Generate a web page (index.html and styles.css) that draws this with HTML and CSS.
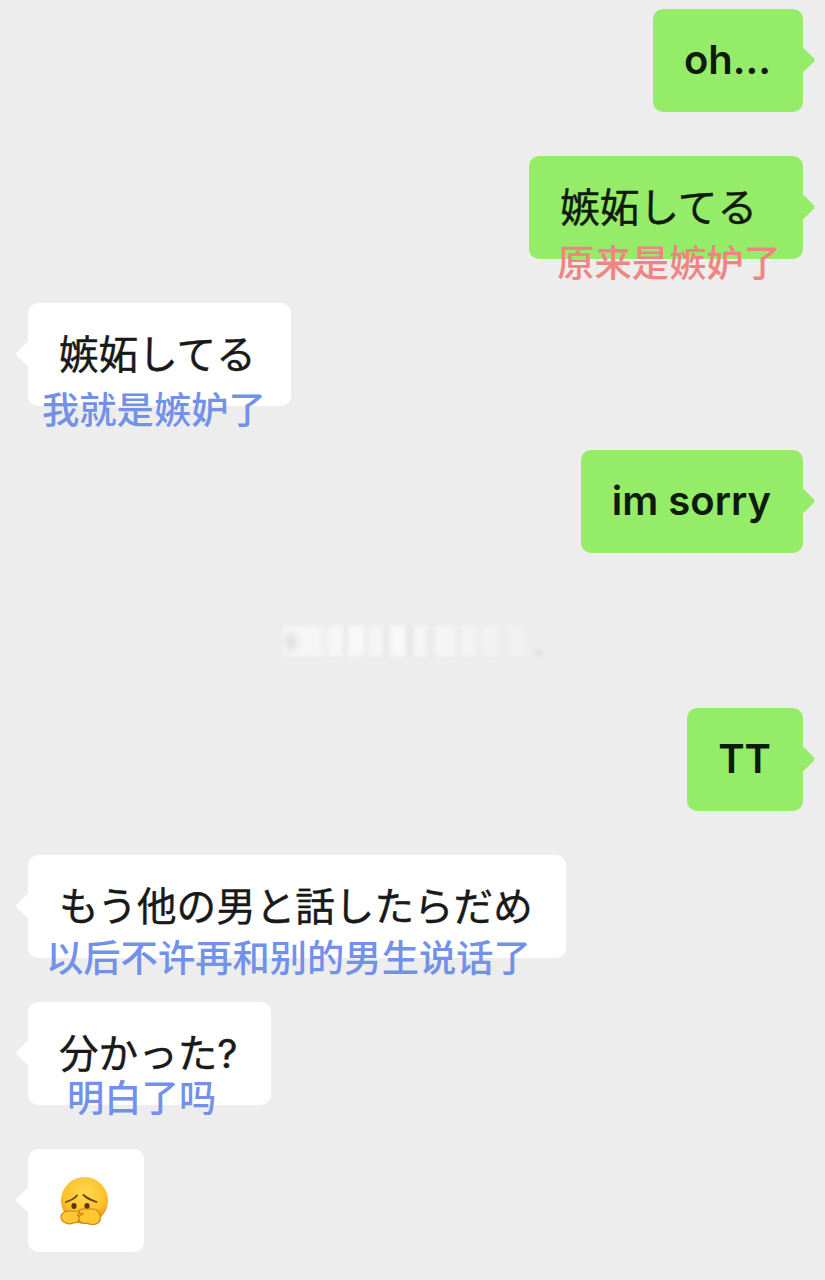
FILE: index.html
```html
<!DOCTYPE html>
<html lang="ja">
<head>
    <meta charset="UTF-8">
    <title>Chat</title>
    <link rel="stylesheet" href="styles.css">
</head>
<body>
    <div class="chat">
        <div class="row me">
            <div class="bubble latin">oh...</div>
        </div>
        <div class="row me">
            <div class="bubble wide">嫉妬してる
                <span class="sub red sub-a" lang="zh">原来是嫉妒了</span>
            </div>
        </div>
        <div class="row">
            <div class="bubble roomy">嫉妬してる
                <span class="sub blue sub-b" lang="zh">我就是嫉妒了</span>
            </div>
        </div>
        <div class="row me">
            <div class="bubble latin">im sorry</div>
        </div>

        <div class="notice"><div class="smear"></div></div>

        <div class="row me">
            <div class="bubble latin">TT</div>
        </div>
        <div class="row">
            <div class="bubble">もう他の男と話したらだめ
                <span class="sub blue sub-c" lang="zh">以后不许再和别的男生说话了</span>
            </div>
        </div>
        <div class="row">
            <div class="bubble">分かった?
                <span class="sub blue sub-d" lang="zh">明白了吗</span>
            </div>
        </div>
        <div class="row">
            <div class="bubble emoji-bubble">
                <svg class="emoji" viewBox="0 0 50 50" width="50" height="50" aria-hidden="true">
                    <defs>
                        <radialGradient id="face" cx="50%" cy="35%" r="68%">
                            <stop offset="0" stop-color="#ffd94c"/>
                            <stop offset="0.65" stop-color="#fcc22c"/>
                            <stop offset="1" stop-color="#e48a1a"/>
                        </radialGradient>
                    </defs>
                    <circle cx="24.5" cy="24.500" r="23.500" fill="url(#face)"/>
                    <path d="M6 26c3-1 8-3 11-6.500M36.500 26c-3-1-9-3-13-7" fill="none" stroke="#6b3f12" stroke-width="1.800" stroke-linecap="round"/>
                    <ellipse cx="14" cy="30" rx="2.600" ry="3" fill="#5a3410"/>
                    <ellipse cx="27" cy="30" rx="2.600" ry="3" fill="#5a3410"/>
                    <path d="M1 41c0-3 3-6 7-6h8c3 0 4 3 2 4h-1c2 1 3 3 2 5-1 3-4 3-6 3-2 1-5 1-7 0-3-1-5-3-5-6z" fill="#fdc832" stroke="#d0800f" stroke-width="1.200"/>
                    <path d="M38 47c2-1 3-5 2-8-1-4-4-6-7-6h-11c-3 0-4 3-2 4l3 1c-3 1-5 3-4 6 1 3 5 4 8 3 3 2 8 2 11 0z" fill="#fdc832" stroke="#d0800f" stroke-width="1.200"/>
                </svg>
            </div>
        </div>
    </div>
</body>
</html>
```

FILE: styles.css
```css
body{
    margin:0;
    background:#ededed;
    font-family:Inter,"Noto Sans CJK JP",sans-serif;
    overflow:hidden;
}
.chat{
    height:1280px;
    box-sizing:border-box;
    padding:9px 22px 0 28px;
    display:flex;
    flex-direction:column;
    gap:44px;
}
.row{
    display:flex;
}
.row.me{
    justify-content:flex-end;
}
.bubble{
    position:relative;
    height:103px;
    box-sizing:border-box;
    padding:0 33px 7px 31px;
    display:flex;
    align-items:center;
    background:#fff;
    border-radius:10px;
    font-size:39.6px;
    color:#191919;
    white-space:nowrap;
    -webkit-text-stroke:.4px currentColor;
}
.me .bubble{
    background:#95ec69;
    color:#0f1a0c;
}
.roomy{
    padding-right:35px;
}
.me .wide{
    padding-right:46px;
}
.me .latin{
    padding:0 32px 2px 31px;
    font-size:40px;
    font-weight:600;
    -webkit-text-stroke:0;
}
/* 小尖角 */
.bubble::before{
    content:"";
    position:absolute;
    top:42px;
    left:-9px;
    width:18px;
    height:18px;
    background:inherit;
    border-radius:3px;
    transform:rotate(45deg);
}
.me .bubble::before{
    left:auto;
    right:-9px;
}
.sub{
    position:absolute;
    font-family:"Noto Sans CJK SC",sans-serif;
    font-size:37.3px;
    font-weight:500;
    line-height:40px;
    -webkit-text-stroke:0;
}
.red{
    color:#f08482;
}
.blue{
    color:#7291e8;
}
.sub-a{
    left:28px;
    top:85px;
}
.sub-b{
    left:14px;
    top:85px;
}
.sub-c{
    left:18px;
    top:81px;
}
.sub-d{
    left:39px;
    top:74px;
}
/* 打码的那条提示 */
.notice{
    height:67px;
    box-sizing:border-box;
    padding-top:20px;
    display:flex;
    align-items:center;
    justify-content:center;
}
.smear{
    width:262px;
    height:30px;
    margin-left:-4px;
    background:
        radial-gradient(ellipse 7px 3px at 256px 27px,#cfcfcf,transparent),
        radial-gradient(ellipse 10px 14px at 8px 16px,#dcdcdc,transparent),
        linear-gradient(90deg,#f6f6f6 0 14%,#f1f1f1 14% 18%,#f7f7f7 18% 23%,#e9e9e9 23% 25%,#f8f8f8 25% 31%,#ececec 31% 33%,#f5f5f5 33% 38%,#e8e8e8 38% 41%,#f8f8f8 41% 47%,#e7e7e7 47% 50%,#f6f6f6 50% 55%,#eaeaea 55% 58%,#f5f5f5 58% 66%,#ebebeb 66% 68%,#f3f3f3 68% 74%,#ececec 74% 76%,#f2f2f2 76% 83%,#ebebeb 83% 85%,#f1f1f1 85% 92%,#ededed 92% 100%);
    filter:blur(2px);
}
.emoji-bubble{
    width:116px;
    padding:0 0 0 32px;
}
.emoji{
    display:block;
}
```
